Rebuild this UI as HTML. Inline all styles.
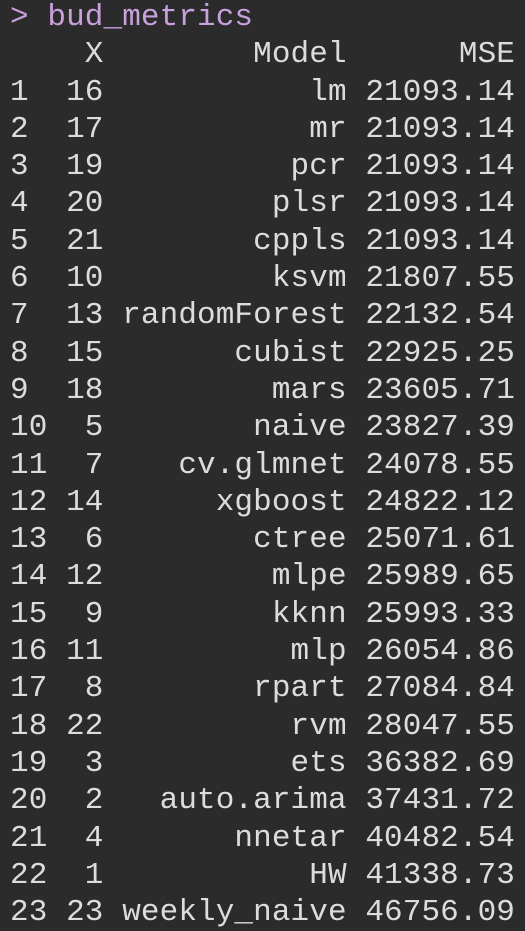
<!DOCTYPE html>
<html><head><style>
html,body{margin:0;padding:0;background:#2b2b2b;width:525px;height:931px;overflow:hidden}
pre{margin:0;position:absolute;left:10px;top:-1px;font-family:"Liberation Mono",monospace;font-size:31px;line-height:37.3px;color:#dcdcdc;letter-spacing:0.1px}
.p{color:#c8a0dc}
</style></head><body>
<pre><span class="p">&gt; bud_metrics</span>
    X        Model      MSE
1  16           lm 21093.14
2  17           mr 21093.14
3  19          pcr 21093.14
4  20         plsr 21093.14
5  21        cppls 21093.14
6  10         ksvm 21807.55
7  13 randomForest 22132.54
8  15       cubist 22925.25
9  18         mars 23605.71
10  5        naive 23827.39
11  7    cv.glmnet 24078.55
12 14      xgboost 24822.12
13  6        ctree 25071.61
14 12         mlpe 25989.65
15  9         kknn 25993.33
16 11          mlp 26054.86
17  8        rpart 27084.84
18 22          rvm 28047.55
19  3          ets 36382.69
20  2   auto.arima 37431.72
21  4       nnetar 40482.54
22  1           HW 41338.73
23 23 weekly_naive 46756.09</pre>
</body></html>
